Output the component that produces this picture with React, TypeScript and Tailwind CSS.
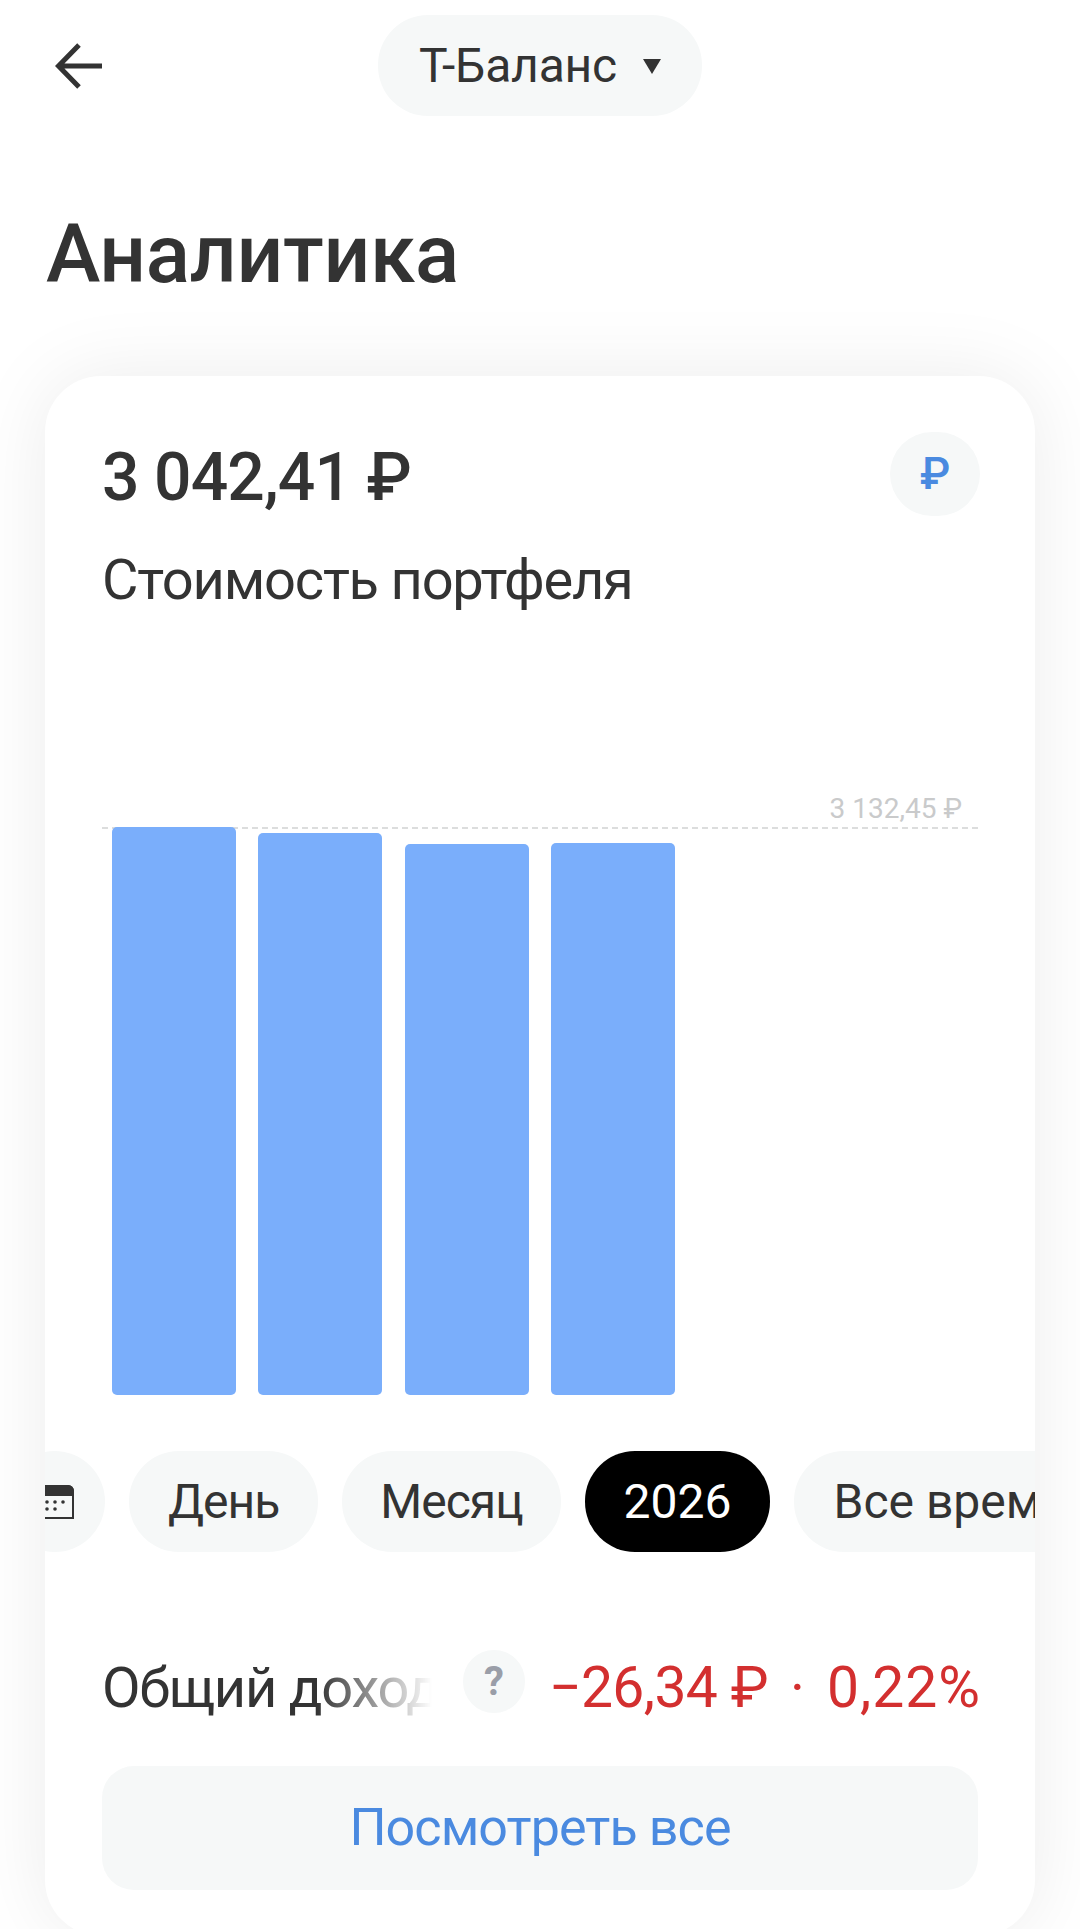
import React from "react";

const font = { fontFamily: "Roboto, Inter, sans-serif" };

function Chip({ label, className }: { label: string; className: string }) {
  return (
    <div className={`flex h-[101px] shrink-0 items-center rounded-[50px] text-[48px] ${className}`}>
      {label}
    </div>
  );
}

export default function App() {
  return (
    <div style={font} className="flex h-[1929px] w-[1080px] flex-col overflow-hidden bg-white text-[#333333]">
      <header className="grid grid-cols-[1fr_auto_1fr] items-center px-[55px] pt-[15px]">
        <svg width="48" height="46" viewBox="0 0 48 46" fill="none" stroke="#333333" strokeWidth="5">
          <path d="M47 23H4M24 2 3.500 23 24 44" />
        </svg>
        <div className="flex h-[101px] items-center gap-[25px] rounded-[50px] bg-[#f6f8f8] pl-[41px] pr-[40px] text-[48px] tracking-[-0.2px]">
          <span>Т-Баланс</span>
          <svg width="20" height="18" viewBox="0 0 20 18" fill="#333333">
            <path d="M1 2h18L10 17z" />
          </svg>
        </div>
        <div />
      </header>

      <h1 className="ml-[46px] mt-[90px] text-[82px] font-medium leading-[97px] tracking-[-0.3px]">Аналитика</h1>

      <section className="mx-[45px] mt-[73px] flex min-h-[1560px] shrink-0 flex-col overflow-hidden rounded-[56px] bg-white shadow-[0_0_80px_rgba(0,0,0,0.08)]">
        <div className="flex items-start justify-between pl-[57px] pr-[55px] pt-[60px]">
          <div className="flex flex-col">
            <div className="text-[66px] font-medium leading-[84px] tracking-[-0.9px]">3 042,41 ₽</div>
            <div className="mt-[28px] text-[56px] leading-[64px] tracking-[-1.2px]">Стоимость портфеля</div>
          </div>
          <div className="-mt-[4px] flex h-[84px] w-[90px] items-center justify-center rounded-full bg-[#f6f8f8] text-[44px] font-medium text-[#4a8ae0]">
            ₽
          </div>
        </div>

        <div className="mx-[57px] mt-[179px]">
          <div className="pr-[16px] text-right text-[28px] leading-[36px] text-[#c9cacb]">3 132,45 ₽</div>
          <div className="flex h-[568px] items-end gap-[22.4px] border-t-2 border-dashed border-[#dcdddd] px-[10px]">
            <div className="h-[568px] w-[124px] rounded-[5px] bg-[#7aaefb]" />
            <div className="h-[562px] w-[124px] rounded-[5px] bg-[#7aaefb]" />
            <div className="h-[551px] w-[124px] rounded-[5px] bg-[#7aaefb]" />
            <div className="h-[552px] w-[124px] rounded-[5px] bg-[#7aaefb]" />
          </div>
        </div>

        <div className="ml-[-41px] mt-[56px] flex gap-[24px]">
          <div className="flex h-[101px] w-[101px] shrink-0 items-center justify-center rounded-full bg-[#f6f8f8]">
            <svg className="ml-[5px]" width="34" height="34" viewBox="0 0 34 34" fill="none">
              <path d="M1 6a5 5 0 0 1 5-5h22a5 5 0 0 1 5 5v27H1z" stroke="#333333" strokeWidth="2" />
              <path d="M0 6a6 6 0 0 1 6-6h22a6 6 0 0 1 6 6v5H0z" fill="#333333" />
              <g fill="#333333">
                <circle cx="7" cy="17" r="1.800" />
                <circle cx="15" cy="17" r="1.800" />
                <circle cx="23" cy="17" r="1.800" />
                <circle cx="7" cy="24" r="1.800" />
                <circle cx="15" cy="24" r="1.800" />
              </g>
            </svg>
          </div>
          <Chip label="День" className="bg-[#f6f8f8] px-[39px] tracking-[-1px] text-[#333333]" />
          <Chip label="Месяц" className="bg-[#f6f8f8] px-[38px] tracking-[-1px] text-[#333333]" />
          <Chip label="2026" className="bg-black px-[39px] text-white" />
          <Chip label="Все время" className="bg-[#f6f8f8] px-[39px] text-[#333333]" />
        </div>

        <div className="mt-[98px] flex items-center pl-[57px] pr-[54px]">
          <div className="w-[330px] overflow-hidden whitespace-nowrap text-[56px] leading-[64px] tracking-[-1.2px] [mask-image:linear-gradient(to_right,black_65%,transparent_100%)]">
            Общий доход
          </div>
          <div className="mb-[12px] ml-[31px] flex h-[63px] w-[62px] shrink-0 items-center justify-center rounded-full bg-[#f6f8f8] text-[40px] font-bold leading-none text-[#9a9ea8]">
            ?
          </div>
          <div className="ml-auto flex items-center gap-[22px] whitespace-nowrap text-[57px] leading-[64px] text-[#d32f2f]">
            <span className="tracking-[-0.6px]">−26,34 ₽</span>
            <span>·</span>
            <span className="tracking-[1px]">0,22%</span>
          </div>
        </div>

        <div className="mx-[57px] mt-[41px] flex h-[124px] items-center justify-center rounded-[32px] bg-[#f6f8f8] text-[52px] tracking-[-0.9px] text-[#4a8ae0]">
          Посмотреть все
        </div>
      </section>
    </div>
  );
}
